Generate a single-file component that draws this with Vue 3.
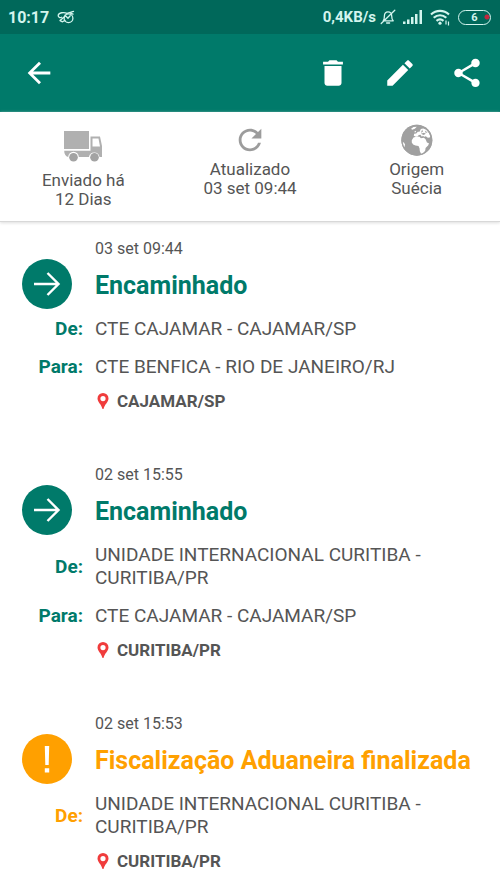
<script setup>
const events = [
  {
    date: '03 set 09:44',
    title: 'Encaminhado',
    kind: 'forward',
    rows: [
      { label: 'De:', value: 'CTE CAJAMAR - CAJAMAR/SP' },
      { label: 'Para:', value: 'CTE BENFICA - RIO DE JANEIRO/RJ' }
    ],
    place: 'CAJAMAR/SP'
  },
  {
    date: '02 set 15:55',
    title: 'Encaminhado',
    kind: 'forward',
    rows: [
      { label: 'De:', value: 'UNIDADE INTERNACIONAL CURITIBA - CURITIBA/PR' },
      { label: 'Para:', value: 'CTE CAJAMAR - CAJAMAR/SP' }
    ],
    place: 'CURITIBA/PR'
  },
  {
    date: '02 set 15:53',
    title: 'Fiscalização Aduaneira finalizada',
    kind: 'alert',
    rows: [{ label: 'De:', value: 'UNIDADE INTERNACIONAL CURITIBA - CURITIBA/PR' }],
    place: 'CURITIBA/PR'
  }
]
</script>

<template>
  <div class="screen">
    <div class="status">
      <span class="clock">10:17</span>
      <svg class="doodle" width="18" height="14" viewBox="0 0 18 14" fill="none" stroke="currentColor" stroke-width="1.3" stroke-linecap="round">
        <circle cx="11.5" cy="8.2" r="4.4" />
        <path d="M10 3.4C7 1.8 1.6 2.6 1.2 5.4c-.2 2 2 2.6 3.400 1.800M3 10.600l5-4.400M5.500 11.800l2.500-1.400M3 10.600l2.500 1.200M8 5.200l3 3 2.200-2.400M10 3.400l6.500-2M13.500 3.200l2.500 1" />
      </svg>
      <span class="rate">0,4KB/s</span>
      <svg class="bell" width="16" height="16" viewBox="0 0 16 16" fill="none" stroke="currentColor" stroke-width="1.3" stroke-linecap="round" stroke-linejoin="round">
        <path d="M3.200 11.800c1-1.200 1.200-2.400 1.200-4.800 0-2.600 1.400-4.200 3.600-4.200 2.300 0 3.700 1.600 3.700 4.200 0 2.400.3 3.600 1.500 4.800zM6.600 14h3M1.200 14.500L14.800 1.200" />
      </svg>
      <svg class="signal" width="20" height="14" viewBox="0 0 20 14" fill="currentColor">
        <path d="M0 11.500h2.500V14H0zM4 9.500h2.500V14H4zM8 7h2.500v7H8zM12 4h2.500v10H12zM16.500 0H19v14h-2.500z" />
      </svg>
      <svg class="wifi" width="21" height="17" viewBox="0 0 21 17" fill="none" stroke="currentColor" stroke-width="2.200">
        <path d="M1 5.500c5.200-4.800 12.800-4.800 18 0M3.700 8.800c3.800-3.400 8.800-3.400 12.600 0M6.500 11.900c2.200-1.800 4.800-1.800 7 0" />
        <circle cx="10" cy="14.200" r="1.600" fill="currentColor" stroke="none" />
        <path d="M16 11.500v4M18.500 12.500v4" stroke-width="1.200" />
      </svg>
      <span class="battery">6</span>
    </div>

    <header class="bar">
      <button class="tool back" aria-label="Voltar">
        <svg width="34" height="34" viewBox="0 0 24 24" fill="currentColor"><path d="M20 11H7.830l5.590-5.590L12 4l-8 8 8 8 1.410-1.410L7.830 13H20v-2z" /></svg>
      </button>
      <button class="tool" aria-label="Excluir">
        <svg width="34" height="34" viewBox="0 0 24 24" fill="currentColor"><path d="M6 19c0 1.100.9 2 2 2h8c1.100 0 2-.9 2-2V7H6v12zM19 4h-3.500l-1-1h-5l-1 1H5v2h14V4z" /></svg>
      </button>
      <button class="tool" aria-label="Editar">
        <svg width="34" height="34" viewBox="0 0 24 24" fill="currentColor"><path d="M3 17.250V21h3.750L17.810 9.940l-3.750-3.750L3 17.250zM20.710 7.040c.39-.39.39-1.020 0-1.410l-2.340-2.340c-.39-.39-1.020-.39-1.410 0l-1.830 1.830 3.750 3.750 1.830-1.830z" /></svg>
      </button>
      <button class="tool" aria-label="Compartilhar">
        <svg width="34" height="34" viewBox="0 0 24 24" fill="currentColor"><path d="M18 16.080c-.76 0-1.440.3-1.960.77L8.910 12.700c.05-.23.09-.46.09-.7s-.04-.47-.09-.7l7.050-4.110c.54.5 1.250.81 2.040.81 1.660 0 3-1.340 3-3s-1.340-3-3-3-3 1.340-3 3c0 .24.04.47.09.7L8.040 9.810C7.500 9.310 6.790 9 6 9c-1.660 0-3 1.340-3 3s1.340 3 3 3c.79 0 1.500-.31 2.040-.81l7.120 4.160c-.05.21-.08.43-.08.65 0 1.610 1.310 2.920 2.920 2.920s2.920-1.310 2.920-2.920-1.310-2.920-2.920-2.920z" /></svg>
      </button>
    </header>

    <section class="summary">
      <div class="fact sent">
        <svg width="40" height="31" viewBox="0 0 40 31" fill="#b0b0b0">
          <path d="M1 0h25v18H1zM27.500 5.500H37L39 15v11h-2.500a5.300 5.300 0 0 0-10.500 0H15.800a5.300 5.300 0 0 0-10.600 0C2.500 25.500 1.200 23 1.200 19.800h26.300zM29.500 7.500v8H37l-1.500-8z" fill-rule="evenodd" />
          <circle cx="10.500" cy="26.200" r="4.300" fill="#a3a3a3" />
          <circle cx="31.500" cy="26.200" r="4.300" fill="#a3a3a3" />
        </svg>
        <p>Enviado há<br>12 Dias</p>
      </div>
      <div class="fact">
        <svg width="34" height="34" viewBox="0 0 24 24" fill="#9c9c9c"><path d="M17.650 6.350C16.200 4.900 14.210 4 12 4c-4.420 0-7.990 3.580-7.990 8s3.570 8 7.990 8c3.730 0 6.840-2.550 7.730-6h-2.080c-.82 2.330-3.040 4-5.650 4-3.310 0-6-2.690-6-6s2.690-6 6-6c1.660 0 3.140.69 4.220 1.780L13 11h7V4l-2.350 2.350z" /></svg>
        <p>Atualizado<br>03 set 09:44</p>
      </div>
      <div class="fact">
        <svg width="34" height="34" viewBox="-4 -5 101 101">
          <circle cx="46" cy="46" r="46" fill="#a0a0a0" />
          <g fill="#fff">
            <path d="M31 46l5-8 10-3 8 1 4 4 9-1 5 4 4 10 6 2-2 6-8 8-1 8-7 9-5 1-4-8-1-9-3-7-9-1-7-3-4-6z" />
            <path d="M37 33l1-6 6-1 5-5 5 0 4-8 7-2 9 4 8 10 4 10-3 4-6-1-4-4-5 2-4-3-3 3-4-6-5 1-4 4-5 1z" />
            <path d="M29 12l7-5 10-1-6 6-8 3zM39 20l3-2 2 4-4 1zM2 50l6 4 3 5-2 8-3-3z" />
          </g>
          <path d="M58 27l9-3 6 3-7 4zM62 14l2 7-6 3zM70 17l8 6-6 1zM72 37l4 6 6 1-3 4-5-4z" fill="#a0a0a0" />
          <circle cx="46" cy="46" r="44" fill="none" stroke="#a0a0a0" stroke-width="4" />
        </svg>
        <p>Origem<br>Suécia</p>
      </div>
    </section>

    <main class="timeline">
      <article v-for="event in events" :key="event.date" class="event" :class="event.kind">
        <time class="date">{{ event.date }}</time>
        <span class="badge">
          <svg v-if="event.kind === 'forward'" width="50" height="50" viewBox="0 0 50 50" fill="none" stroke="#fff" stroke-width="2.400">
            <path d="M12 25h25M25.500 14l11 11-11 11" />
          </svg>
          <svg v-else width="50" height="50" viewBox="0 0 50 50" fill="#fff">
            <path d="M22.800 12h4.400l-.5 19h-3.400zM22.800 34.200h4.400v4.400h-4.400z" />
          </svg>
        </span>
        <h2 class="title">{{ event.title }}</h2>
        <dl class="route">
          <div v-for="row in event.rows" :key="row.label" class="leg">
            <dt>{{ row.label }}</dt>
            <dd>{{ row.value }}</dd>
          </div>
        </dl>
        <p class="place">
          <svg width="12" height="17" viewBox="0 0 12 17" fill="#f03c3c">
            <path fill-rule="evenodd" d="M6 0a5.500 5.500 0 0 1 5.500 5.500C11.500 9 7.500 11.500 6.500 16h-1C4.500 11.500.5 9 .5 5.500A5.500 5.500 0 0 1 6 0zM6 3a2.600 2.600 0 1 0 0 5.200A2.600 2.600 0 0 0 6 3z" />
          </svg>
          {{ event.place }}
        </p>
      </article>
    </main>
  </div>
</template>

<style>
body {
  margin: 0;
  background: #fff;
}
</style>

<style scoped>
.screen {
  font-family: Roboto, sans-serif;
  color: #555;
  background: #fff;
}

.status {
  display: flex;
  align-items: center;
  height: 34px;
  padding: 0 9px 0 8px;
  background: #00685a;
  color: #d3f5ee;
}

.clock {
  font-size: 16px;
  font-weight: 700;
}

.doodle {
  margin-left: 8px;
}

.rate {
  margin-left: auto;
  font-size: 15px;
  font-weight: 700;
}

.bell {
  margin-left: 4px;
}

.signal {
  margin-left: 7px;
}

.wifi {
  margin-left: 7px;
}

.battery {
  box-sizing: border-box;
  width: 33px;
  height: 15px;
  margin-left: 7px;
  border: 1px solid currentColor;
  border-radius: 8px;
  background: radial-gradient(circle at 28px 6px, #c2273d 2px, transparent 3px);
  font-size: 11px;
  font-weight: 700;
  line-height: 13px;
  text-align: center;
}

.bar {
  display: flex;
  align-items: center;
  gap: 33px;
  height: 78px;
  padding: 0 16px 0 22px;
  background: #007a6a;
}

.tool {
  display: flex;
  padding: 0;
  border: 0;
  background: none;
  color: #fff;
}

.back {
  margin-right: auto;
}

.summary {
  display: grid;
  grid-template-columns: repeat(3, 1fr);
  padding: 11px 0 12px;
  border-bottom: 1px solid #d8d8d8;
  box-shadow: 0 1px 3px #ddd;
}

.fact {
  display: flex;
  flex-direction: column;
  align-items: center;
  gap: 3px;
  font-size: 17px;
  line-height: 19px;
  text-align: center;
}

.sent {
  gap: 9px;
  padding-top: 8px;
}

.fact p {
  margin: 0;
}

.timeline {
  display: flex;
  flex-direction: column;
  gap: 54px;
  padding: 17px 12px 17px 0;
}

.event {
  display: grid;
  grid-template-columns: 83px 1fr;
  column-gap: 12px;
  --accent: #007a6a;
}

.alert {
  --accent: #ffa000;
}

.date {
  grid-column: 2;
  font-size: 16px;
  line-height: 20px;
}

.badge {
  display: flex;
  justify-self: end;
  margin-right: 11px;
  border-radius: 50%;
  background: var(--accent);
}

.title {
  align-self: center;
  margin: 0;
  padding-top: 4px;
  color: var(--accent);
  font-size: 25px;
  font-weight: 700;
  line-height: 30px;
}

.route {
  display: grid;
  grid-column: 1 / -1;
  gap: 15px;
  margin: 8px 0 13px;
  font-size: 19px;
  line-height: 23px;
}

.leg {
  display: grid;
  grid-template-columns: 83px 1fr;
  column-gap: 12px;
  align-items: center;
}

.leg dt {
  color: var(--accent);
  font-weight: 700;
  text-align: right;
}

.leg dd {
  margin: 0;
}

.place {
  display: flex;
  grid-column: 2;
  align-items: center;
  gap: 8px;
  margin: 0;
  padding-left: 2px;
  font-size: 17px;
  font-weight: 700;
  line-height: 20px;
}
</style>
